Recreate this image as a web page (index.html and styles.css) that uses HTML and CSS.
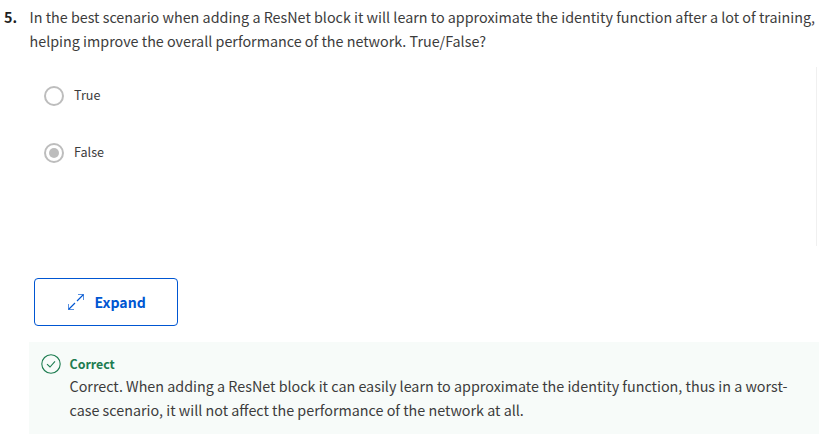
FILE: index.html
```html
<!DOCTYPE html>
<html lang="en">
<head>
<meta charset="utf-8">
<title>Quiz question</title>
<link rel="stylesheet" href="styles.css">
</head>
<body>
<main class="question">
  <div class="number">5.</div>
  <div class="content">
    <p class="prompt"><span class="line">In the best scenario when adding a ResNet block it will learn to approximate the identity function after a lot of training,</span> <span class="line">helping improve the overall performance of the network. True/False?</span></p>
    <div class="options">
      <div class="option"><span class="radio"></span><span class="label">True</span></div>
      <div class="option"><span class="radio selected"></span><span class="label">False</span></div>
    </div>
    <button class="expand" type="button">
      <svg width="18" height="18" viewBox="0 0 18 18" fill="none" stroke="currentColor"><path d="M10 8L16.5 1.5M8 10L1.5 16.5" stroke-width="1.2"/><path d="M11 1.5H16.5V7M1.5 11V16.5H7" stroke-opacity=".65"/></svg>
      <span>Expand</span>
    </button>
    <section class="feedback">
      <svg class="check" width="20" height="20" viewBox="0 0 20 20" fill="none" stroke="currentColor"><circle cx="10" cy="10" r="9.2" stroke-width="1.1"/><path d="M6 10.2L9 13L14 7.3" stroke-width="1.1"/></svg>
      <div>
        <h2>Correct</h2>
        <p><span class="line">Correct. When adding a ResNet block it can easily learn to approximate the identity function, thus in a worst-</span> <span class="line">case scenario, it will not affect the performance of the network at all.</span></p>
      </div>
    </section>
  </div>
</main>
</body>
</html>
```
FILE: styles.css
```css
* { box-sizing: border-box; }
body { margin: 0; background: #fff; color: #3c3c3c; font: 14.33px/24px "Noto Sans CJK SC", sans-serif; }
p, h2 { margin: 0; }
.question { display: flex; padding-top: 5px; }
.number { width: 29px; padding-left: 4px; flex: none; font-weight: 700; color: #1f1f1f; }
.content { flex: 1; min-width: 0; }
.prompt { padding-left: 0.5px; }
.line { display: block; white-space: nowrap; }
.options { height: 179px; margin: 14px 2px 0 0; padding: 17px 0 0 15px; border-right: 1px solid #f0f0f0; display: flex; flex-direction: column; gap: 33px; }
.option { display: flex; align-items: center; gap: 10px; height: 24px; font-size: 12.6px; }
.radio { width: 20px; height: 20px; border: 2px solid #bdbdbd; border-radius: 50%; display: grid; place-items: center; }
.selected::after { content: ""; width: 10px; height: 10px; border-radius: 50%; background: #bdbdbd; }
.label { position: relative; top: -1px; }
.expand { display: flex; align-items: center; gap: 9.5px; width: 144px; height: 48px; margin: 32px 0 16px 5px; padding: 0 0 0 32px; background: #fff; border: 1px solid #0056d2; border-radius: 4px; color: #0056d2; font: 700 14.1px/24px "Noto Sans CJK SC", sans-serif; }
.feedback { display: flex; gap: 8.5px; height: 92px; padding: 11px 0 0 12px; background: #f7fbf9; }
.check { color: #1d7c50; margin-top: 1px; flex: none; }
.feedback h2 { margin-bottom: -1px; color: #1d7c50; font-size: 12.4px; line-height: 22px; }
```
